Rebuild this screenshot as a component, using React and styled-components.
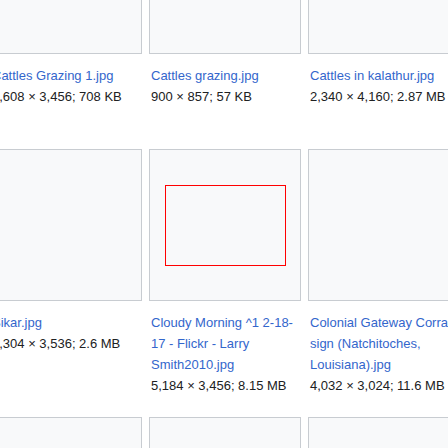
import React from "react";
import styled, { createGlobalStyle } from "styled-components";

const items = [
  { name: "Cattles Grazing 1.jpg", size: "4,608 × 3,456; 708 KB" },
  { name: "Cattles grazing.jpg", size: "900 × 857; 57 KB" },
  { name: "Cattles in kalathur.jpg", size: "2,340 × 4,160; 2.87 MB" },
  { name: "Cattle near the village pond, Tamil Nadu.jpg", size: "3,264 × 2,448; 1.9 MB" },
  { name: "Sikar.jpg", size: "5,304 × 3,536; 2.6 MB", broken: true },
  {
    name: "Cloudy Morning ^1 2-18-17 - Flickr - Larry Smith2010.jpg",
    size: "5,184 × 3,456; 8.15 MB",
    broken: true,
    marker: true,
  },
  { name: "Colonial Gateway Corral sign (Natchitoches, Louisiana).jpg", size: "4,032 × 3,024; 11.6 MB" },
  { name: "Cows.jpg", size: "1,024 × 768; 210 KB" },
  { name: "Cows in a field.jpg", size: "2,048 × 1,536; 980 KB" },
  { name: "Cows resting.jpg", size: "3,000 × 2,000; 1.2 MB" },
  { name: "Cow herd.jpg", size: "1,600 × 1,200; 640 KB" },
  { name: "Cow pasture.jpg", size: "2,592 × 1,944; 1.4 MB" },
];

const App = () => {
  return (
    <>
      <GlobalStyle />
      <Gallery>
        {items.map((item) => (
          <GalleryBox key={item.name}>
            <Thumb>{item.marker && <Placeholder />}</Thumb>
            <GalleryText>
              <FileLink href="#">{item.name}</FileLink>
              <FileSize>{item.size}</FileSize>
            </GalleryText>
          </GalleryBox>
        ))}
      </Gallery>
    </>
  );
};

export default App;

const GlobalStyle = createGlobalStyle`
  html, body {
    margin: 0;
    padding: 0;
    background: #ffffff;
    overflow: hidden;
  }
  body {
    font-family: "Liberation Sans", Arial, sans-serif;
  }
`;

const Gallery = styled.ul`
  display: grid;
  grid-template-columns: repeat(4, 155px);
  column-gap: 4px;
  align-items: start;
  list-style: none;
  margin: -98px 0 0 -10px;
  padding: 0;
  width: 632px;
`;

const GalleryBox = styled.li`
  display: flex;
  flex-direction: column;
  padding-bottom: 21px;
`;

const Thumb = styled.div`
  width: 152px;
  height: 152px;
  box-sizing: border-box;
  border: 1px solid #c8ccd1;
  background: #f8f9fa;
  display: flex;
  align-items: center;
  justify-content: center;
`;

const Placeholder = styled.div`
  width: 121px;
  height: 81px;
  box-sizing: border-box;
  border: 1px solid #ff0000;
`;

const GalleryText = styled.div`
  margin-top: 11px;
  padding-left: 2px;
  width: 148px;
  font-size: 13px;
  line-height: 21px;
  word-wrap: break-word;
`;

const FileLink = styled.a`
  display: block;
  color: #3366cc;
  text-decoration: none;
`;

const FileSize = styled.div`
  color: #202122;
`;
